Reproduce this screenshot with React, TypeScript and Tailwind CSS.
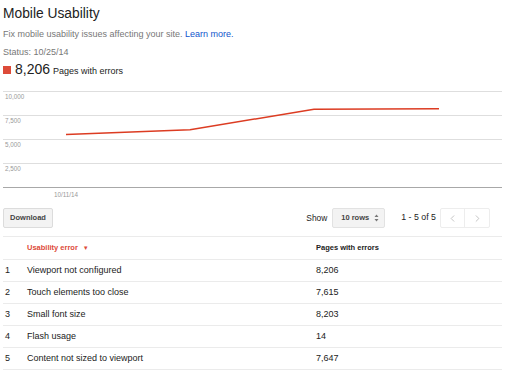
import { ChevronLeft, ChevronRight } from 'lucide-react';

const rows = [
  { id: 1, error: 'Viewport not configured', pages: '8,206' },
  { id: 2, error: 'Touch elements too close', pages: '7,615' },
  { id: 3, error: 'Small font size', pages: '8,203' },
  { id: 4, error: 'Flash usage', pages: '14' },
  { id: 5, error: 'Content not sized to viewport', pages: '7,647' },
];

function Chart() {
  const grid = [
    { y: 2, label: '10,000' },
    { y: 26, label: '7,500' },
    { y: 50, label: '5,000' },
    { y: 74, label: '2,500' },
  ];
  return (
    <svg width="499" height="112" viewBox="0 0 499 112" className="block">
      {grid.map((g) => (
        <g key={g.label}>
          <line x1="0" x2="499" y1={g.y + 0.5} y2={g.y + 0.5} stroke="#dedede" strokeWidth="1" />
          <text x="2" y={g.y + 7.5} fontSize="6.3" fill="#999" fontFamily="'Liberation Sans', Arial, sans-serif">
            {g.label}
          </text>
        </g>
      ))}
      <line x1="0" x2="499" y1="98.5" y2="98.5" stroke="#a8a8a8" strokeWidth="1" />
      <text x="51" y="108" fontSize="6.3" fill="#999" fontFamily="'Liberation Sans', Arial, sans-serif">
        10/11/14
      </text>
      <polyline
        points="63,45.5 187,40.7 311,20.3 436,19.7"
        fill="none"
        stroke="#dc3c22"
        strokeWidth="1.5"
        strokeLinejoin="round"
      />
    </svg>
  );
}

export default function App() {
  return (
    <div className="w-[512px] h-[373px] bg-white overflow-hidden font-['Liberation_Sans',Arial,sans-serif]">
      <div className="pl-[3px] pt-[5px] w-[502px]">
        <h1 className="text-[13.8px] leading-[17px] text-[#222]">Mobile Usability</h1>
        <p className="mt-[6px] text-[9px] leading-[12px] text-[#777]">
          Fix mobile usability issues affecting your site.{' '}
          <span className="text-[#1155cc]">Learn more.</span>
        </p>
        <p className="mt-[6px] text-[9px] leading-[12px] text-[#777]">Status: 10/25/14</p>
        <div className="mt-[2px] flex items-baseline h-[18px]">
          <span className="w-[8px] h-[8px] bg-[#dd4b39] mr-[4px] self-center mt-[1px]" />
          <span className="text-[14px] leading-[18px] text-[#222]">8,206</span>
          <span className="ml-[3px] text-[9px] text-[#222]">Pages with errors</span>
        </div>

        <div className="mt-[11px]">
          <Chart />
        </div>

        <div className="mt-[7px] flex items-center justify-between pr-[12px] h-[20px]">
          <button className="h-[20px] w-[50px] bg-[#f3f3f3] border border-[#dcdcdc] rounded-[2px] text-[7.5px] font-bold text-[#444]">
            Download
          </button>
          <div className="flex items-center">
            <span className="text-[8.4px] text-[#222] mr-[5px]">Show</span>
            <div className="h-[20px] w-[53px] bg-[#f3f3f3] border border-[#e2e2e2] rounded-[2px] flex items-center pl-[8px] pr-[5px] justify-between">
              <span className="text-[7.5px] font-bold text-[#444]">10 rows</span>
              <svg width="5" height="8" viewBox="0 0 5 8">
                <path d="M0.5 3 L2.5 0.5 L4.5 3 Z M0.5 5 L2.5 7.5 L4.5 5 Z" fill="#777" />
              </svg>
            </div>
            <span className="ml-[16px] text-[8.8px] text-[#222]">1 - 5 of 5</span>
            <div className="ml-[4px] flex h-[20px] border border-[#ededed] rounded-[2px]">
              <span className="w-[24px] flex items-center justify-center border-r border-[#ededed]">
                <ChevronLeft size={11} strokeWidth={1.5} color="#aaa" />
              </span>
              <span className="w-[24px] flex items-center justify-center">
                <ChevronRight size={11} strokeWidth={1.5} color="#aaa" />
              </span>
            </div>
          </div>
        </div>

        <div className="mt-[8px] w-[499px] border-t border-[#ebebeb]">
          <div className="flex items-center h-[23px] border-b border-[#ebebeb] text-[7.5px] font-bold">
            <span className="w-[24px]" />
            <span className="w-[289px] text-[#dd4b39] flex items-center">
              Usability error
              <span className="ml-[5px] text-[6px]">▼</span>
            </span>
            <span className="text-[#222]">Pages with errors</span>
          </div>
          {rows.map((r) => (
            <div key={r.id} className="flex items-center h-[22px] border-b border-[#ebebeb] text-[9px] text-[#222]">
              <span className="w-[24px] pl-[2px]">{r.id}</span>
              <span className="w-[289px]">{r.error}</span>
              <span>{r.pages}</span>
            </div>
          ))}
        </div>
      </div>
    </div>
  );
}
